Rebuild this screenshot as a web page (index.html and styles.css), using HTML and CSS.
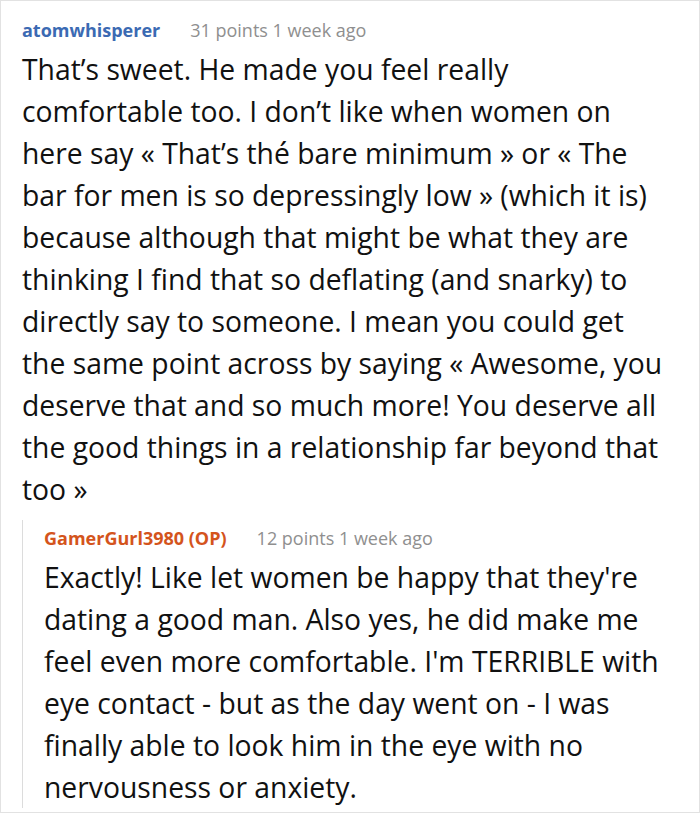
FILE: index.html
```html
<!DOCTYPE html>
<html>
<head>
<meta charset="utf-8">
<link rel="stylesheet" href="styles.css">
</head>
<body>
<div class="card">
  <div class="comment">
    <div class="meta">
      <span class="author">atomwhisperer</span>
      <span class="info">31 points 1 week ago</span>
    </div>
    <p class="body">That’s sweet. He made you feel really comfortable too. I don’t like when women on here say « That’s thé bare minimum » or « The bar for men is so depressingly low » (which it is) because although that might be what they are thinking I find that so deflating (and snarky) to directly say to someone. I mean you could get the same point across by saying « Awesome, you deserve that and so much more! You deserve all the good things in a relationship far beyond that too »</p>
    <div class="reply">
      <div class="meta">
        <span class="author op">GamerGurl3980 (OP)</span>
        <span class="info">12 points 1 week ago</span>
      </div>
      <p class="body">Exactly! Like let women be happy that they're dating a good man. Also yes, he did make me feel even more comfortable. I'm TERRIBLE with eye contact - but as the day went on - I was finally able to look him in the eye with no nervousness or anxiety.</p>
    </div>
  </div>
</div>
</body>
</html>
```
FILE: styles.css
```css
html, body {
  margin: 0;
  padding: 0;
  background: #fff;
}
.card {
  box-sizing: border-box;
  width: 700px;
  height: 813px;
  border: 1px solid #e2e2e2;
  padding: 11px 35px 0 21px;
  font-family: "Open Sans", "Noto Sans", sans-serif;
  color: #111;
}
.meta {
  display: flex;
  align-items: baseline;
  gap: 30px;
  font-size: 18px;
  line-height: 36px;
}
.author {
  font-weight: 700;
  color: #3b6ab3;
}
.author.op {
  color: #d4541c;
}
.info {
  color: #8f8f8f;
}
.body {
  margin: 0;
  font-size: 28.3px;
  line-height: 42px;
}
.reply {
  margin-top: 24px;
  border-left: 1px solid #dcdcdc;
  padding-left: 21px;
}
.reply .meta {
  margin-top: -14px;
}
.reply .body {
  margin-bottom: -12px;
}
```
